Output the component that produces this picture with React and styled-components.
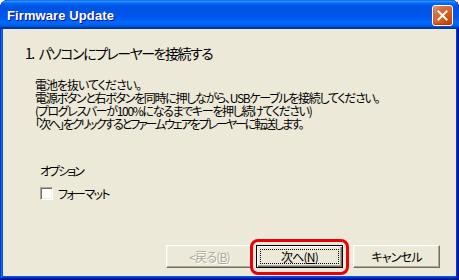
import React from "react";
import styled, { createGlobalStyle } from "styled-components";

const Global = createGlobalStyle`
  html, body { margin: 0; padding: 0; background: #ffffff; }
  body { width: 459px; height: 280px; overflow: hidden; }
`;

const Window = styled.div`
  width: 459px;
  height: 280px;
  box-sizing: border-box;
  display: flex;
  flex-direction: column;
  border-radius: 8px 8px 0 0;
  background: #0054e3;
  box-shadow: inset -1px -1px #00138c, inset 1px 1px #0831d9,
    inset -2px -2px #001ea0, inset 2px 2px #166aee,
    inset -3px -3px #003bda, inset 3px 3px #0855dd;
  padding: 0 3px 4px 3px;
  overflow: hidden;
`;

const TitleBar = styled.div`
  height: 29px;
  margin: 0 -3px;
  flex: none;
  display: flex;
  align-items: center;
  justify-content: space-between;
  padding: 0 6px 0 7px;
  border-radius: 8px 8px 0 0;
  background: linear-gradient(
    180deg,
    #0058ee 0%,
    #3593ff 4%,
    #288eff 6%,
    #127dff 8%,
    #036ffc 10%,
    #0262ee 14%,
    #0057e5 20%,
    #0054e3 24%,
    #0055eb 56%,
    #005bf5 66%,
    #026afe 76%,
    #0062ef 86%,
    #0052d6 92%,
    #0040ab 94%,
    #003092 100%
  );
`;

const TitleText = styled.span`
  font-family: "Liberation Sans", Arial, sans-serif;
  font-weight: bold;
  font-size: 13px;
  color: #ffffff;
  letter-spacing: 0.1px;
  text-shadow: 1px 1px #0f1089;
  margin-top: 1px;
`;

const CloseButton = styled.div`
  width: 21px;
  height: 21px;
  box-sizing: border-box;
  border: 1px solid #ffffff;
  border-radius: 3px;
  background: radial-gradient(circle at 85% 85%, #cc4600 0%, #dc6527 55%, #cd7546 70%, #e5a27f 100%);
  background-color: #e0582f;
  box-shadow: inset 0 -1px 2px #b0300c;
  display: flex;
  align-items: center;
  justify-content: center;
  margin-top: 1px;
`;

const Client = styled.div`
  flex: 1;
  background: #ece9d8;
  display: flex;
  flex-direction: column;
  font-family: "Noto Sans CJK JP", "Liberation Sans", sans-serif;
  font-feature-settings: "palt" 1;
  color: #000000;
`;

const Heading = styled.div`
  font-size: 14px;
  line-height: 16px;
  letter-spacing: -1.5px;
  margin: 16px 0 0 22px;
  white-space: pre;
`;

const Body = styled.div`
  font-size: 12px;
  line-height: 13px;
  margin: 17px 0 0 32px;
`;

const Line = styled.div`
  white-space: nowrap;
  letter-spacing: ${(p) => p.$tracking}px;
`;

const OptionLabel = styled.div`
  font-size: 12px;
  line-height: 13px;
  letter-spacing: -2px;
  margin: 34px 0 0 37px;
`;

const CheckRow = styled.label`
  display: flex;
  align-items: center;
  gap: 5px;
  margin: 10px 0 0 37px;
  font-size: 12px;
  line-height: 13px;
  letter-spacing: -1.6px;
`;

const CheckBox = styled.span`
  width: 13px;
  height: 13px;
  box-sizing: border-box;
  background: #ffffff;
  border: 1px solid;
  border-color: #aca899 #ffffff #ffffff #aca899;
  box-shadow: inset 1px 1px #716f64, inset -1px -1px #f1efe2;
  flex: none;
`;

const Spacer = styled.div`
  flex: 1;
`;

const ButtonRow = styled.div`
  display: flex;
  justify-content: flex-end;
  align-items: center;
  padding: 0 16px 8px 0;
`;

const Button = styled.div`
  position: relative;
  width: 87px;
  height: 23px;
  box-sizing: border-box;
  margin-left: ${(p) => p.$gap || 0}px;
  display: flex;
  align-items: center;
  justify-content: center;
  background: #ece9d8;
  font-size: 12px;
  letter-spacing: -0.8px;
  color: ${(p) => (p.$disabled ? "#aca899" : "#000000")};
  text-shadow: ${(p) => (p.$disabled ? "1px 1px #ffffff" : "none")};
  border: 1px solid;
  border-color: ${(p) =>
    p.$default ? "#000000" : "#ffffff #716f64 #716f64 #ffffff"};
  box-shadow: ${(p) =>
    p.$default
      ? "inset 1px 1px #ffffff, inset -1px -1px #716f64, inset -2px -2px #aca899"
      : "inset -1px -1px #aca899, inset 1px 1px #f1efe2"};
  ${(p) =>
    p.$annotated &&
    `
    &::after {
      content: "";
      position: absolute;
      left: -7px;
      right: -7px;
      top: -7px;
      bottom: -8px;
      border: 3px solid #e8000b;
      border-radius: 8px;
    }
  `}
`;

const Focus = styled.span`
  position: absolute;
  inset: 3px;
  border: 1px dotted #000000;
`;

const Label = styled.span`
  position: relative;
`;

const lines = [
  { text: "電池を抜いてください。", tracking: -1 },
  { text: "電源ボタンと右ボタンを同時に押しながら、USBケーブルを接続してください。", tracking: -1.3 },
  { text: "(プログレスバーが100%になるまでキーを押し続けてください)", tracking: -1.35 },
  { text: "「次へ」をクリックするとファームウェアをプレーヤーに転送します。", tracking: -2.1 },
];

export default function App() {
  return (
    <>
      <Global />
      <Window>
        <TitleBar>
          <TitleText>Firmware Update</TitleText>
          <CloseButton>
            <svg width="11" height="11" viewBox="0 0 11 11">
              <path d="M1.5 1.5 L9.5 9.5 M9.5 1.5 L1.5 9.5" stroke="#ffffff" strokeWidth="2" strokeLinecap="square" />
            </svg>
          </CloseButton>
        </TitleBar>
        <Client>
          <Heading>1.   パソコンにプレーヤーを接続する</Heading>
          <Body>
            {lines.map((l) => (
              <Line key={l.text} $tracking={l.tracking}>
                {l.text}
              </Line>
            ))}
          </Body>
          <OptionLabel>オプション</OptionLabel>
          <CheckRow>
            <CheckBox />
            <span>フォーマット</span>
          </CheckRow>
          <Spacer />
          <ButtonRow>
            <Button $disabled>
              <Label>
                &lt;戻る(<u>B</u>)
              </Label>
            </Button>
            <Button $default $annotated $gap={3}>
              <Focus />
              <Label>
                次へ(<u>N</u>)
              </Label>
            </Button>
            <Button $gap={10}>
              <Label>キャンセル</Label>
            </Button>
          </ButtonRow>
        </Client>
      </Window>
    </>
  );
}
